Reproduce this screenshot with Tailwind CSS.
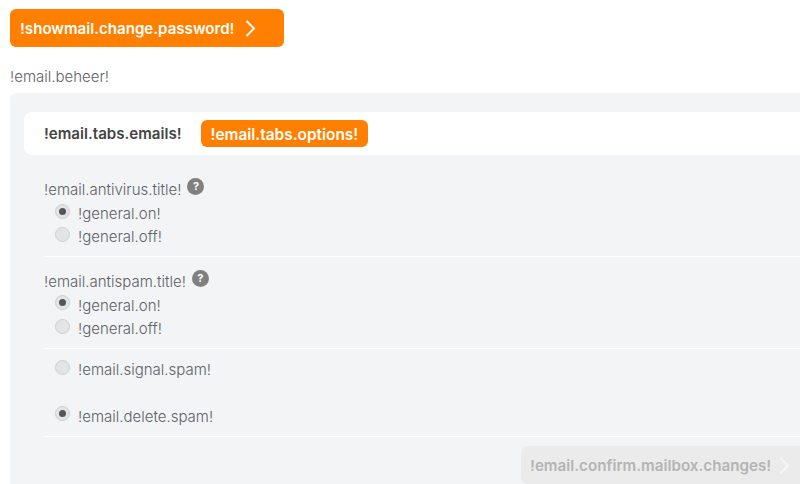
<!DOCTYPE html>
<html lang="en">
<head>
  <meta charset="UTF-8">
  <title>email</title>
  <script src="https://cdn.jsdelivr.net/npm/@tailwindcss/browser@4"></script>
</head>
<body class="bg-white h-[484px] w-[800px] overflow-hidden font-['Inter',sans-serif] text-[15px] text-[#5c6166]">
  <div class="pt-[9px] pl-[10px]">
    <button class="flex items-center w-[274px] h-[38px] pl-[10px] bg-[#ff7f00] rounded-md text-white font-semibold text-[15.1px]">
      <span class="pt-[2px]">!showmail.change.password!</span>
      <svg class="ml-[11px]" width="11" height="17" viewBox="0 0 11 17" fill="none" stroke="white" stroke-width="1.9"><path d="M1.5 1l7.5 7.5L1.5 16"/></svg>
    </button>
    <p class="mt-[20px] h-[20px] leading-[20px] font-light">!email.beheer!</p>
    <div class="mt-[6px] h-[391px] bg-[#f3f4f6] rounded-tl-md pt-[19px] pl-[14px]">
      <!-- tabs -->
      <div class="flex items-center h-[43px] bg-white rounded-l-lg pl-[20px]">
        <span class="pt-[2px] font-semibold text-[15.1px] text-[#444]">!email.tabs.emails!</span>
        <span class="ml-[19px] flex items-center h-[27px] pt-[2px] px-[10px] bg-[#ff7f00] rounded-md text-white font-semibold text-[15.4px]">!email.tabs.options!</span>
      </div>

      <div class="ml-[20px] mt-[23px] font-light">
        <!-- antivirus -->
        <div class="flex items-start h-[22px] leading-[24px]">
          !email.antivirus.title!
          <span class="ml-[6px] mt-0 w-[17px] h-[17px] rounded-full bg-[#808080] text-white text-[11px] leading-[17px] font-bold text-center">?</span>
        </div>
        <div class="flex flex-col">
          <label class="flex items-center h-[24px] pl-[11px]">
            <span class="w-[15px] h-[15px] rounded-full border border-[#cfcfcf] bg-[#e4e4e4] flex items-center justify-center -mt-[2px]"><span class="w-[7px] h-[7px] rounded-full bg-[#555]"></span></span>
            <span class="ml-[8px] pt-[4px]">!general.on!</span>
          </label>
          <label class="flex items-center h-[23px] pl-[11px]">
            <span class="w-[15px] h-[15px] rounded-full border border-[#cfcfcf] bg-[#e4e4e4] -mt-[2px]"></span>
            <span class="ml-[8px] pt-[4px]">!general.off!</span>
          </label>
        </div>
        <div class="h-px bg-white mt-[9px]"></div>

        <!-- antispam -->
        <div class="flex items-start h-[21px] leading-[22px] mt-[14px]">
          !email.antispam.title!
          <span class="ml-[6px] -mt-[1px] w-[17px] h-[17px] rounded-full bg-[#808080] text-white text-[11px] leading-[17px] font-bold text-center">?</span>
        </div>
        <div class="flex flex-col">
          <label class="flex items-center h-[24px] pl-[11px]">
            <span class="w-[15px] h-[15px] rounded-full border border-[#cfcfcf] bg-[#e4e4e4] flex items-center justify-center -mt-[4px]"><span class="w-[7px] h-[7px] rounded-full bg-[#555]"></span></span>
            <span class="ml-[8px] pt-[4px]">!general.on!</span>
          </label>
          <label class="flex items-center h-[23px] pl-[11px]">
            <span class="w-[15px] h-[15px] rounded-full border border-[#cfcfcf] bg-[#e4e4e4] -mt-[2px]"></span>
            <span class="ml-[8px] pt-[4px]">!general.off!</span>
          </label>
        </div>
        <div class="h-px bg-white mt-[9px]"></div>

        <label class="flex items-center h-[24px] pl-[11px] mt-[9px]">
          <span class="w-[15px] h-[15px] rounded-full border border-[#cfcfcf] bg-[#e4e4e4] -mt-[6px]"></span>
          <span class="ml-[8px]">!email.signal.spam!</span>
        </label>
        <label class="flex items-center h-[24px] pl-[11px] mt-[23px]">
          <span class="w-[15px] h-[15px] rounded-full border border-[#cfcfcf] bg-[#e4e4e4] flex items-center justify-center -mt-[8px]"><span class="w-[7px] h-[7px] rounded-full bg-[#555]"></span></span>
          <span class="ml-[8px]">!email.delete.spam!</span>
        </label>
        <div class="h-px bg-white mt-[7px]"></div>

        <!-- confirm -->
        <button class="flex items-center ml-[477px] mt-[9px] w-[279px] h-[38px] pl-[9px] bg-[#ebebeb] rounded-l-md text-[#b4b4b4] font-semibold text-[15.2px]">
          <span class="pt-[2px]">!email.confirm.mailbox.changes!</span>
          <svg class="ml-[8px]" width="11" height="17" viewBox="0 0 11 17" fill="none" stroke="#f6f6f6" stroke-width="1.9"><path d="M1.5 1l7.5 7.5L1.5 16"/></svg>
        </button>
      </div>
    </div>
  </div>
</body>
</html>
